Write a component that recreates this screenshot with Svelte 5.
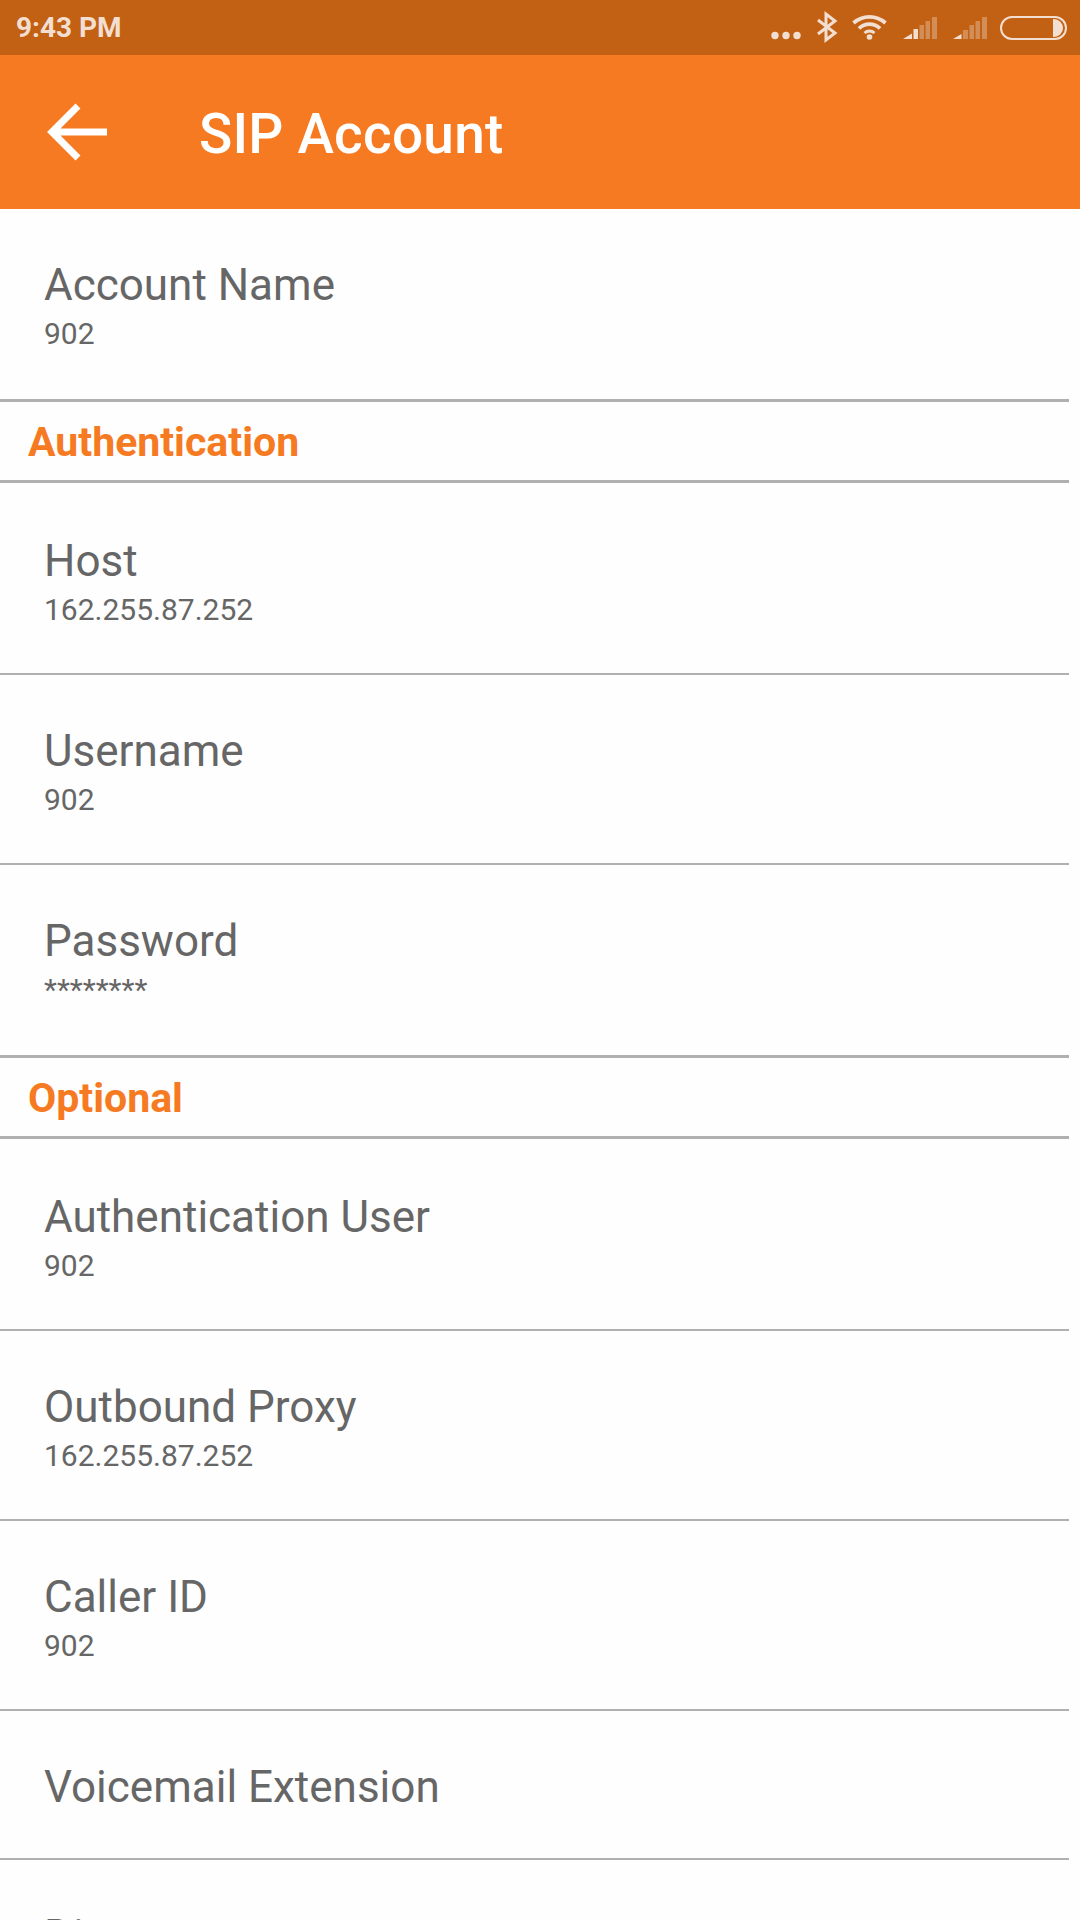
<script>
  const sections = [
    { type: 'item', label: 'Account Name', value: '902', h: 193, line: 3 },
    { type: 'head', label: 'Authentication' },
    { type: 'item', label: 'Host', value: '162.255.87.252', h: 192, line: 2, first: true },
    { type: 'item', label: 'Username', value: '902', h: 190, line: 2 },
    { type: 'item', label: 'Password', value: '********', h: 193, line: 3 },
    { type: 'head', label: 'Optional' },
    { type: 'item', label: 'Authentication User', value: '902', h: 192, line: 2, first: true },
    { type: 'item', label: 'Outbound Proxy', value: '162.255.87.252', h: 190, line: 2 },
    { type: 'item', label: 'Caller ID', value: '902', h: 190, line: 2 },
    { type: 'item', label: 'Voicemail Extension', value: '', h: 149, line: 2 },
    { type: 'item', label: 'Di', value: '', h: 149, line: 0 }
  ];
</script>

<div class="screen">
  <div class="status">
    <span class="time">9:43 PM</span>
    <svg class="icons" width="300" height="35" viewBox="770 10 300 35" fill="#f3dfd2">
      <circle cx="775" cy="35.500" r="3.700"/><circle cx="786" cy="35.500" r="3.700"/><circle cx="797" cy="35.500" r="3.700"/>
      <path d="M818 20 L835 33 L826 40 V14 L835 21 L818 34" fill="none" stroke="#f3dfd2" stroke-width="3"/>
      <path d="M853.500 23 A24 24 0 0 1 885.500 23" fill="none" stroke="#f3dfd2" stroke-width="3.800"/>
      <path d="M859 28.500 A15 15 0 0 1 880 28.500" fill="none" stroke="#f3dfd2" stroke-width="3.800"/>
      <path d="M864.500 33 A7.500 7.500 0 0 1 874.500 33" fill="none" stroke="#f3dfd2" stroke-width="3"/>
      <circle cx="869.500" cy="37" r="2.800"/>
      <path d="M903 39 L912 33.500 V39 Z"/>
      <rect x="913.500" y="29" width="4.500" height="10"/>
      <rect x="919.500" y="25" width="4.500" height="14" opacity=".35"/>
      <rect x="925.500" y="21" width="4.500" height="18" opacity=".35"/>
      <rect x="932" y="17" width="5" height="22" opacity=".35"/>
      <path d="M953 39 L961.500 34 V39 Z"/>
      <rect x="963" y="30" width="5" height="9" opacity=".35"/>
      <rect x="969.500" y="25" width="4.500" height="14" opacity=".35"/>
      <rect x="975.500" y="21" width="4.500" height="18" opacity=".35"/>
      <rect x="982" y="17" width="5" height="22" opacity=".35"/>
      <rect x="1001" y="17" width="65" height="22" rx="11" fill="none" stroke="#f3dfd2" stroke-width="2"/>
      <path d="M1053 19 H1054 A9 9 0 0 1 1054 37 H1053 Z"/>
    </svg>
  </div>
  <header class="bar">
    <svg class="back" width="64" height="60" viewBox="45 102 64 60">
      <path d="M107 132 H52 M78 106 L52 132 L78 158" fill="none" stroke="#fff" stroke-width="7"/>
    </svg>
    <h1>SIP Account</h1>
  </header>
  <div class="list">
    {#each sections as s}
      {#if s.type === 'head'}
        <div class="head">{s.label}</div>
      {:else}
        <div class="item" class:first={s.first} class:thick={s.line === 3} class:noline={s.line === 0} style="height:{s.h}px">
          <div class="label">{s.label}</div>
          {#if s.value}<div class="value">{s.value}</div>{/if}
        </div>
      {/if}
    {/each}
  </div>
</div>

<style>
  :global(body) { margin: 0; background: #fff; }
  .screen { width: 1080px; height: 1920px; overflow: hidden; background: #fefefe; font-family: Roboto, sans-serif; }
  .status { height: 55px; background: #c26114; display: flex; align-items: flex-start; padding: 0 10px 0 16px; box-sizing: border-box; }
  .time { color: #f3dfd2; font-size: 28px; font-weight: 700; line-height: 55px; flex: 1; }
  .icons { margin-top: 10px; }
  .bar { height: 154px; background: #f67a21; display: flex; align-items: center; padding-left: 45px; box-sizing: border-box; }
  .back { margin-right: 90px; flex: none; }
  h1 { margin: 4px 0 0; color: #fff; font-size: 55px; font-weight: 500; letter-spacing: 0.2px; }
  .item { box-sizing: border-box; padding: 51px 0 0 44px; border-bottom: 2px solid #b0b0b0; margin-right: 11px; }
  .item.first { padding-top: 53px; }
  .item.thick { border-bottom-width: 3px; }
  .item.noline { border-bottom: 0; }
  .label { color: #666; font-size: 44px; line-height: 50px; }
  .value { color: #666; font-size: 30px; line-height: 40px; margin-top: 4px; }
  .head { height: 81px; box-sizing: border-box; padding: 16px 0 0 28px; color: #f67a21; font-size: 41px; font-weight: 700; line-height: 48px; border-bottom: 3px solid #b0b0b0; margin-right: 11px; }
</style>
